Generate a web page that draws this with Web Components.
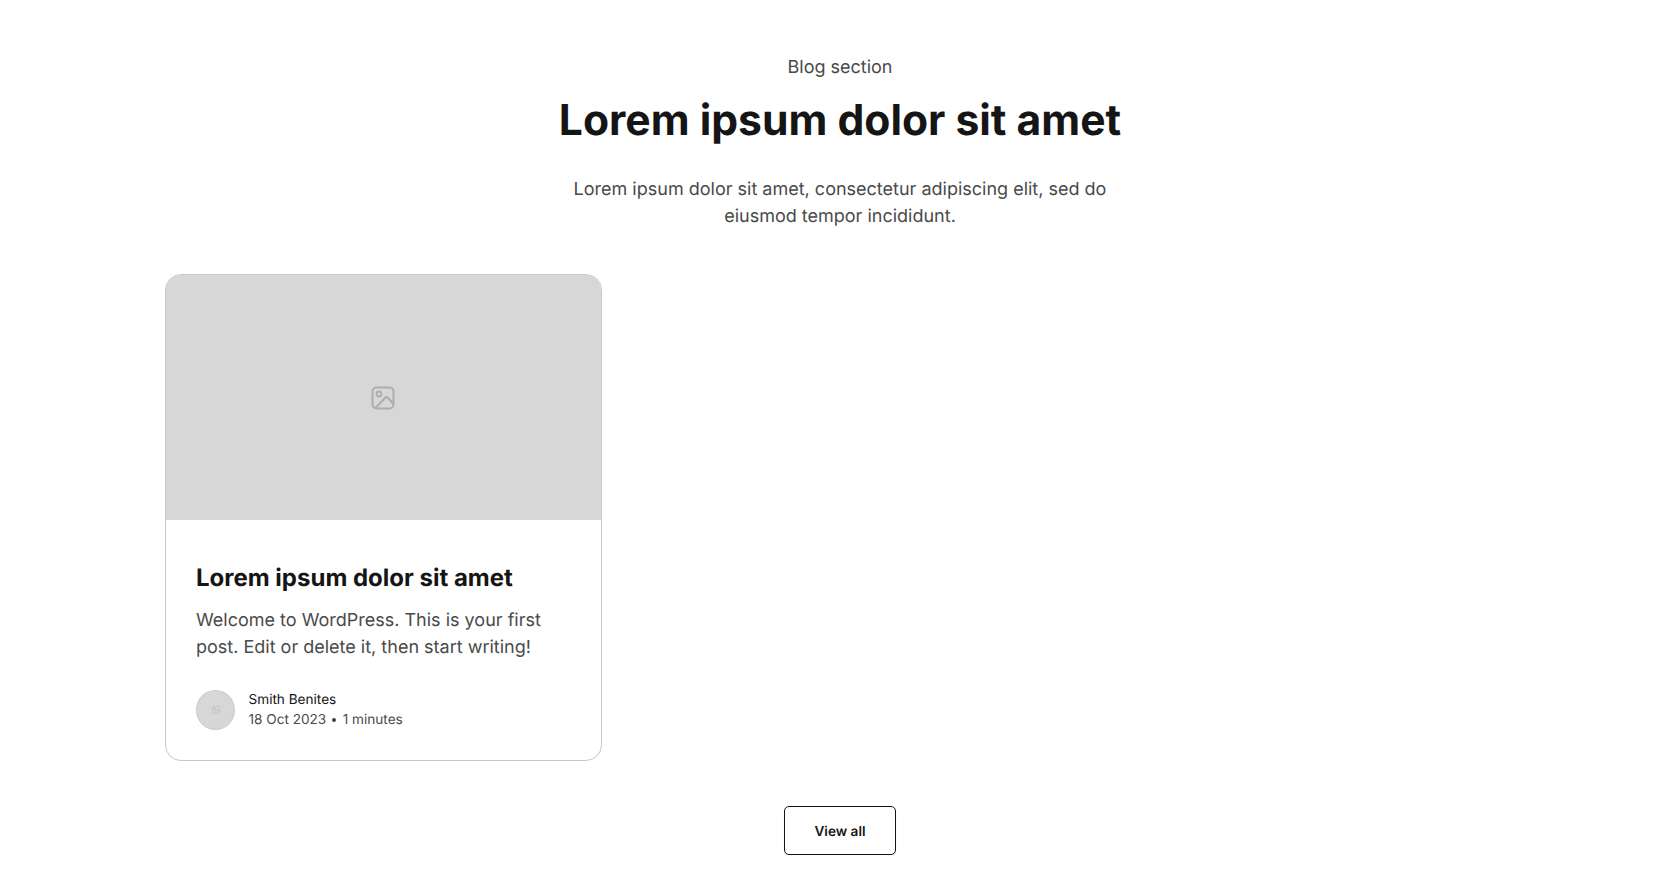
<!DOCTYPE html>
<html><head><meta charset="utf-8"><style>
html,body{margin:0;background:#fff;font-family:Inter,sans-serif;text-rendering:geometricPrecision}
</style></head><body>
<blog-section>
<span slot="tag">Blog section</span>
<span slot="title">Lorem ipsum dolor sit amet</span>
<span slot="desc">Lorem ipsum dolor sit amet, consectetur adipiscing elit, sed do eiusmod tempor incididunt.</span>
<blog-card>
<span slot="title">Lorem ipsum dolor sit amet</span>
<span slot="text">Welcome to WordPress. This is your first post. Edit or delete it, then start writing!</span>
<span slot="author">Smith Benites</span>
<span slot="date">18 Oct 2023</span>
<span slot="read">1 minutes</span>
</blog-card>
<span slot="action">View all</span>
</blog-section>
<script>
const ICON=`<svg viewBox="0 0 24 24" fill="none" stroke="currentColor" stroke-width="2" stroke-linecap="round" stroke-linejoin="round"><rect x="1.5" y="1.5" width="21" height="21" rx="4"/><circle cx="8" cy="8" r="2.4"/><path d="M4.5 22 L14.5 11.5 Q15.5 10.5 16.5 11.5 L22.5 18"/></svg>`;
customElements.define('blog-section',class extends HTMLElement{constructor(){super();this.attachShadow({mode:'open'}).innerHTML=`<style>
:host{display:block;box-sizing:border-box;width:1350px;margin:0 auto;padding-top:55px;color:#151515}
header{display:flex;flex-direction:column;align-items:center;text-align:center}
.tag{font-size:18px;line-height:25px;color:#4a4a4a}
h2{margin:14px 0 0;font-size:42.6px;line-height:53px;font-weight:700;color:#151515}
p{margin:29px 0 0;width:560px;font-size:18px;line-height:27px;color:#4a4a4a}
.grid{display:grid;grid-template-columns:repeat(3,1fr);gap:20px;margin-top:44px}
.act{display:flex;justify-content:center;margin-top:45px}
.btn{display:flex;align-items:center;justify-content:center;box-sizing:border-box;width:112px;height:49px;padding-top:2px;border:1px solid #151515;border-radius:5px;box-shadow:0 1px 1px rgba(0,0,0,.15);font-size:13.6px;font-weight:600;color:#151515}
</style><header><div class="tag"><slot name="tag"></slot></div><h2><slot name="title"></slot></h2><p><slot name="desc"></slot></p></header>
<div class="grid"><slot></slot></div><div class="act"><div class="btn"><slot name="action"></slot></div></div>`}});
customElements.define('blog-card',class extends HTMLElement{constructor(){super();this.attachShadow({mode:'open'}).innerHTML=`<style>
:host{display:block;box-sizing:border-box;height:487px;border:1px solid #c8c8c8;border-radius:16px;overflow:hidden;background:#fff}
.img{height:245px;background:#d7d7d7;display:flex;align-items:center;justify-content:center;color:#aeaeae}
.img svg{width:24px;height:24px}
.body{padding:43px 30px 0}
h3{margin:0;font-size:24px;line-height:29px;font-weight:700;color:#151515}
.text{margin:15px 0 0;font-size:18px;line-height:27px;color:#4a4a4a}
.meta{display:flex;align-items:center;gap:13.5px;margin-top:29px}
.av{width:39px;height:40px;box-sizing:border-box;border:1px solid #ccc;border-radius:50%;background:#d7d7d7;display:flex;align-items:center;justify-content:center;color:#bbb}
.av svg{width:8px;height:8px}
.info{font-size:13.6px;line-height:20px;color:#4a4a4a}
.name{color:#151515}
.row{display:flex;align-items:center;gap:6px}
.dot{width:4px;height:4px;margin:0 1px 0 -.5px;border-radius:50%;background:#444}
</style><div class="img">${ICON}</div><div class="body"><h3><slot name="title"></slot></h3><p class="text"><slot name="text"></slot></p>
<div class="meta"><div class="av">${ICON}</div><div class="info"><div class="name"><slot name="author"></slot></div><div class="row"><slot name="date"></slot><span class="dot"></span><slot name="read"></slot></div></div></div></div>`}});
</script></body></html>
